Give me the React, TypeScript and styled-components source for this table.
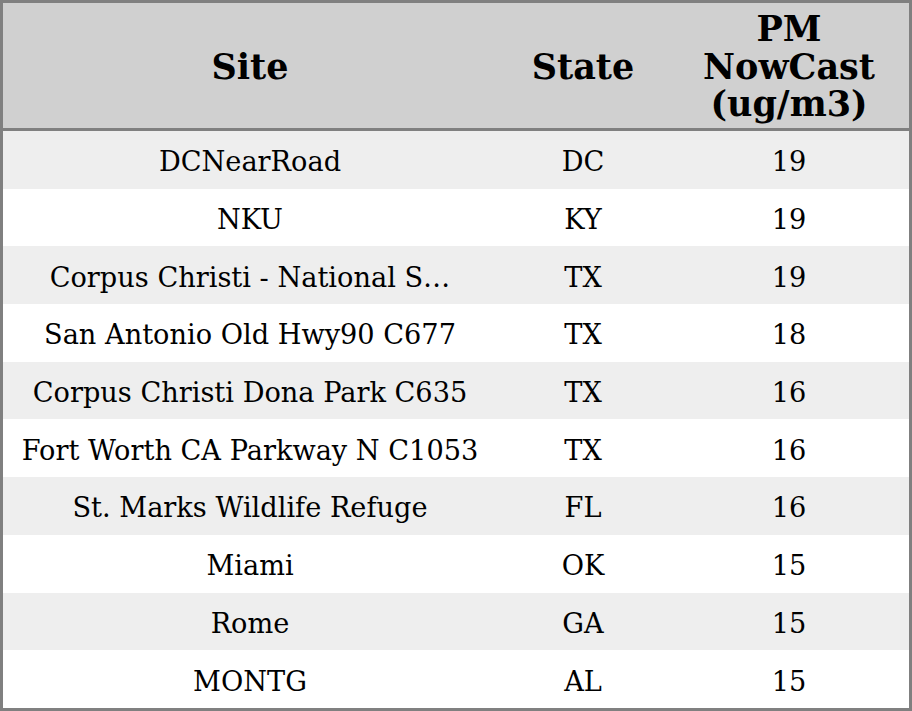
import React from 'react';
import styled, { createGlobalStyle } from 'styled-components';

const GlobalStyle = createGlobalStyle`
  html, body {
    margin: 0;
    padding: 0;
    background: #fff;
  }
`;

const Table = styled.table`
  box-sizing: border-box;
  width: 912px;
  height: 711px;
  border-collapse: separate;
  border-spacing: 0;
  border: 3px solid #808080;
  font-family: 'DejaVu Serif', serif;
  color: #000;
  table-layout: fixed;
`;

const HeadRow = styled.tr`
  background: #d0d0d0;
`;

const HeadCell = styled.th<{ $width: number }>`
  box-sizing: border-box;
  width: ${(p) => p.$width}px;
  height: 128px;
  border-bottom: 3px solid #808080;
  font-size: 35px;
  font-weight: bold;
  text-align: center;
  vertical-align: middle;
  padding: 2px 0 0;
  line-height: 37.5px;
`;

const BodyRow = styled.tr<{ $shaded: boolean }>`
  background: ${(p) => (p.$shaded ? '#eeeeee' : '#ffffff')};
`;

const Cell = styled.td`
  height: 53.7px;
  font-size: 27.2px;
  text-align: center;
  vertical-align: middle;
  padding: 4px 0 0;
  white-space: nowrap;
  overflow: hidden;
`;

interface Reading {
  site: string;
  state: string;
  pm: number;
}

const readings: Reading[] = [
  { site: 'DCNearRoad', state: 'DC', pm: 19 },
  { site: 'NKU', state: 'KY', pm: 19 },
  { site: 'Corpus Christi - National S…', state: 'TX', pm: 19 },
  { site: 'San Antonio Old Hwy90 C677', state: 'TX', pm: 18 },
  { site: 'Corpus Christi Dona Park C635', state: 'TX', pm: 16 },
  { site: 'Fort Worth CA Parkway N C1053', state: 'TX', pm: 16 },
  { site: 'St. Marks Wildlife Refuge', state: 'FL', pm: 16 },
  { site: 'Miami', state: 'OK', pm: 15 },
  { site: 'Rome', state: 'GA', pm: 15 },
  { site: 'MONTG', state: 'AL', pm: 15 },
];

const App: React.FC = () => {
  return (
    <>
      <GlobalStyle />
      <Table>
        <thead>
          <HeadRow>
            <HeadCell $width={494}>Site</HeadCell>
            <HeadCell $width={172}>State</HeadCell>
            <HeadCell $width={240}>
              PM
              <br />
              NowCast
              <br />
              (ug/m3)
            </HeadCell>
          </HeadRow>
        </thead>
        <tbody>
          {readings.map((r, i) => (
            <BodyRow key={i} $shaded={i % 2 === 0}>
              <Cell>{r.site}</Cell>
              <Cell>{r.state}</Cell>
              <Cell>{r.pm}</Cell>
            </BodyRow>
          ))}
        </tbody>
      </Table>
    </>
  );
};

export default App;
